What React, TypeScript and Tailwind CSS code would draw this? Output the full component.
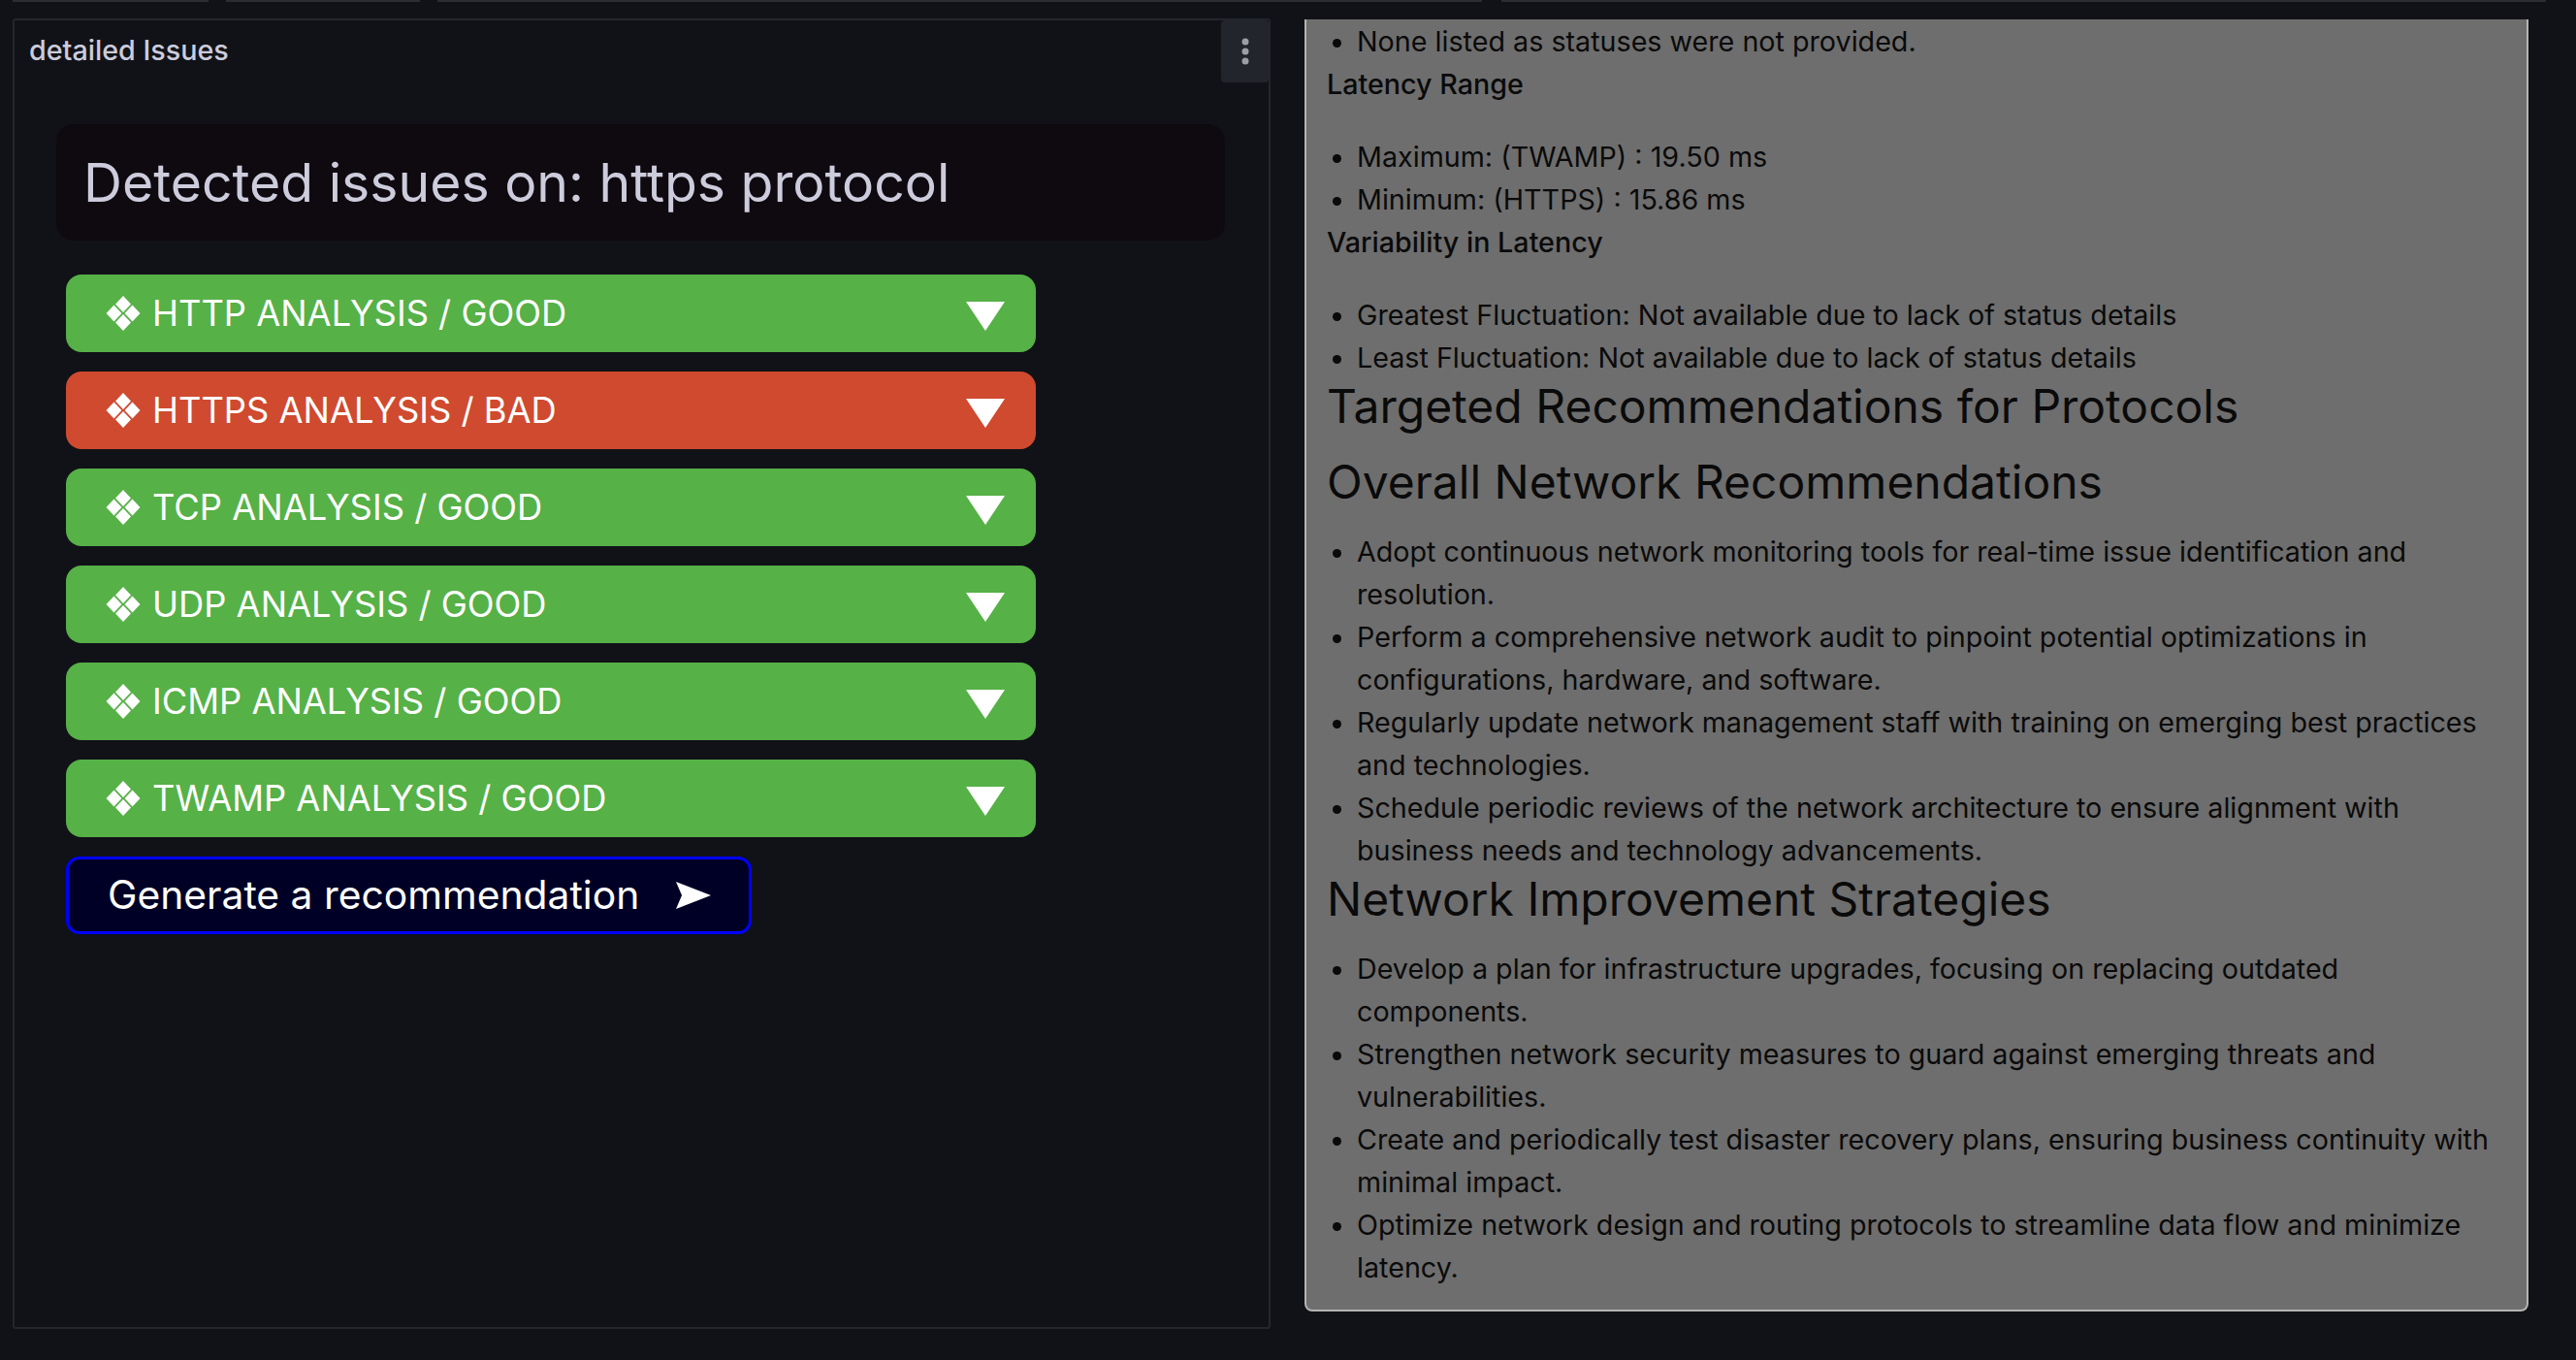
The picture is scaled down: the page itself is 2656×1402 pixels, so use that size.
import React from 'react';

// --- ICONS ---
const DiamondsIcon = () => (
  <svg className="w-[36px] h-[36px] shrink-0" viewBox="0 0 36 36" fill="#ffffff">
    <path d="M18 0l8 8.500-8 8.500-8-8.500zM8.500 9.500l8 8.500-8 8.500-8-8.500zM27.500 9.500l8 8.500-8 8.500-8-8.500zM18 19l8 8.500-8 8.500-8-8.500z" />
  </svg>
);

const CaretIcon = () => (
  <svg className="w-[40px] h-[30px] mt-[6px] shrink-0" viewBox="0 0 40 30" fill="#ffffff">
    <path d="M0 0h40L20 30z" />
  </svg>
);

const ArrowIcon = () => (
  <svg className="w-[36px] h-[28px] ml-[38px] shrink-0" viewBox="0 0 36 28" fill="#ffffff">
    <path d="M0 0l36 14L0 28l6-14z" />
  </svg>
);

const DotsIcon = () => (
  <svg className="w-[8px] h-[30px]" viewBox="0 0 8 30" fill="#9d9ea6">
    <circle cx="4" cy="5" r="3.500" />
    <circle cx="4" cy="15" r="3.500" />
    <circle cx="4" cy="25" r="3.500" />
  </svg>
);

const rows = [
  { label: 'HTTP ANALYSIS / GOOD', bad: false },
  { label: 'HTTPS ANALYSIS / BAD', bad: true },
  { label: 'TCP ANALYSIS / GOOD', bad: false },
  { label: 'UDP ANALYSIS / GOOD', bad: false },
  { label: 'ICMP ANALYSIS / GOOD', bad: false },
  { label: 'TWAMP ANALYSIS / GOOD', bad: false },
];

const Bullets = ({ items, className }: { items: string[]; className?: string }) => (
  <ul className={`list-disc pl-[31px] ${className ?? ''}`}>
    {items.map((item, index) => (
      <li key={index}>{item}</li>
    ))}
  </ul>
);

const DetailedIssues = () => (
  <section className="relative w-[1297px] h-[1351px] border-2 border-[#24262b] rounded-[3px] bg-[#111217]">
    <h2 className="pl-[15px] pt-[13px] text-[28.7px] leading-[36px] font-medium text-[#ccccdc]">detailed Issues</h2>
    <button className="absolute top-0 right-0 w-[49px] h-[64px] flex items-center justify-center bg-[#22252b] rounded-[4px]">
      <DotsIcon />
    </button>
    <div className="mt-[58px] ml-[43px] w-[1205px] h-[120px] flex items-center pl-[28px] bg-[#0f0a10] rounded-[18px] text-[55.3px] text-[#ccccdc]">
      Detected issues on: https protocol
    </div>
    <div className="mt-[35px] ml-[53px] flex flex-col gap-[20px]">
      {rows.map((row) => (
        <div
          key={row.label}
          className={`w-[1000px] h-[80px] flex items-center pl-[41px] pr-[32px] rounded-[16px] text-white text-[36.3px] ${row.bad ? 'bg-[#cf4a2f]' : 'bg-[#56b147]'}`}
        >
          <DiamondsIcon />
          <span className="ml-[12px] flex-1">{row.label}</span>
          <CaretIcon />
        </div>
      ))}
      <button className="w-[707px] h-[80px] flex items-center pl-[40px] border-[3px] border-[#0000ff] rounded-[14px] bg-[#000026] text-white text-[40.8px]">
        <span>Generate a recommendation</span>
        <ArrowIcon />
      </button>
    </div>
  </section>
);

const Recommendations = () => (
  <section className="w-[1262px] h-[1332px] border-x-2 border-b-2 border-[#b4b4b4] rounded-b-[8px] bg-[#6e6e6e] overflow-hidden px-[21px] pt-[1px] text-[28.7px] leading-[44px] text-[#0a0a0a]">
    <Bullets items={['None listed as statuses were not provided.']} />
    <p className="font-medium">Latency Range</p>
    <Bullets className="mt-[31px]" items={['Maximum: (TWAMP) : 19.50 ms', 'Minimum: (HTTPS) : 15.86 ms']} />
    <p className="font-medium">Variability in Latency</p>
    <Bullets
      className="mt-[31px]"
      items={[
        'Greatest Fluctuation: Not available due to lack of status details',
        'Least Fluctuation: Not available due to lack of status details',
      ]}
    />
    <h3 className="text-[48px] leading-[56px]">Targeted Recommendations for Protocols</h3>
    <h3 className="mt-[22px] text-[48px] leading-[56px]">Overall Network Recommendations</h3>
    <Bullets
      className="mt-[22px]"
      items={[
        'Adopt continuous network monitoring tools for real-time issue identification and resolution.',
        'Perform a comprehensive network audit to pinpoint potential optimizations in configurations, hardware, and software.',
        'Regularly update network management staff with training on emerging best practices and technologies.',
        'Schedule periodic reviews of the network architecture to ensure alignment with business needs and technology advancements.',
      ]}
    />
    <h3 className="text-[48px] leading-[56px]">Network Improvement Strategies</h3>
    <Bullets
      className="mt-[22px]"
      items={[
        'Develop a plan for infrastructure upgrades, focusing on replacing outdated components.',
        'Strengthen network security measures to guard against emerging threats and vulnerabilities.',
        'Create and periodically test disaster recovery plans, ensuring business continuity with minimal impact.',
        'Optimize network design and routing protocols to streamline data flow and minimize latency.',
      ]}
    />
  </section>
);

const App: React.FC = () => (
  <div className="w-[2656px] h-[1402px] overflow-hidden bg-[#111217] font-['Inter',sans-serif]">
    <div className="h-[2px] pl-[13px] pr-[31px] flex gap-[18px]">
      <div className="w-[202px] bg-[#2b2d33]"></div>
      <div className="w-[200px] bg-[#2b2d33]"></div>
      <div className="w-[1077px] bg-[#2b2d33]"></div>
      <div className="flex-1 ml-[2px] bg-[#2b2d33]"></div>
    </div>
    <div className="mt-[17px] pl-[13px] flex items-start gap-[35px]">
      <DetailedIssues />
      <div className="pt-[1px]">
        <Recommendations />
      </div>
    </div>
  </div>
);

export default App;
